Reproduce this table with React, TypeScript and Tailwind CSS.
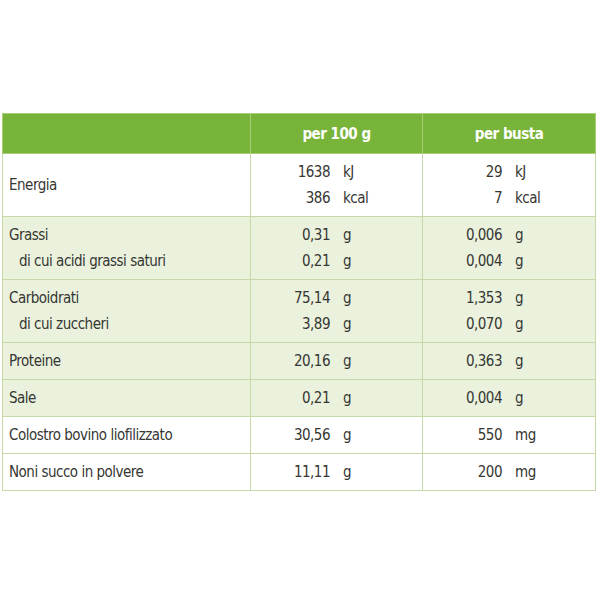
import React from "react";

type Riga = {
	nome: string[];
	cento: [string, string][];
	busta: [string, string][];
	verde: boolean;
};

const righe: Riga[] = [
	{ nome: ["Energia"], cento: [["1638", "kJ"], ["386", "kcal"]], busta: [["29", "kJ"], ["7", "kcal"]], verde: false },
	{
		nome: ["Grassi", "di cui acidi grassi saturi"],
		cento: [["0,31", "g"], ["0,21", "g"]],
		busta: [["0,006", "g"], ["0,004", "g"]],
		verde: true,
	},
	{
		nome: ["Carboidrati", "di cui zuccheri"],
		cento: [["75,14", "g"], ["3,89", "g"]],
		busta: [["1,353", "g"], ["0,070", "g"]],
		verde: true,
	},
	{ nome: ["Proteine"], cento: [["20,16", "g"]], busta: [["0,363", "g"]], verde: true },
	{ nome: ["Sale"], cento: [["0,21", "g"]], busta: [["0,004", "g"]], verde: true },
	{ nome: ["Colostro bovino liofilizzato"], cento: [["30,56", "g"]], busta: [["550", "mg"]], verde: false },
	{ nome: ["Noni succo in polvere"], cento: [["11,11", "g"]], busta: [["200", "mg"]], verde: false },
];

function Valori({ valori }: { valori: [string, string][] }) {
	return (
		<div className="flex flex-col">
			{valori.map(([n, u], i) => (
				<div key={i} className="flex">
					<span className="w-[79px] text-right">{n}</span>
					<span className="ml-[13px]">{u}</span>
				</div>
			))}
		</div>
	);
}

export default function App() {
	return (
		<div className="h-[600px] w-[600px] bg-white pt-[113px] pl-[2px]">
			<table
				className="w-[593px] table-fixed border-collapse text-[15px] leading-[26px] tracking-[-0.5px] text-[#363633]"
				style={{ fontFamily: '"DejaVu Sans Condensed", "DejaVu Sans", sans-serif', fontStretch: "condensed" }}
			>
				<colgroup>
					<col className="w-[248px]" />
					<col className="w-[172px]" />
					<col className="w-[173px]" />
				</colgroup>
				<thead>
					<tr className="h-[40px] bg-[#78b43a] font-bold text-white">
						<th className="border border-[#a8cf78]"></th>
						<th className="border border-[#a8cf78] text-center">per 100 g</th>
						<th className="border border-[#a8cf78] text-center">per busta</th>
					</tr>
				</thead>
				<tbody>
					{righe.map(riga => (
						<tr key={riga.nome[0]} className={riga.verde ? "bg-[#eaf2dd]" : "bg-white"}>
							<td className="border border-[#c6d9a8] py-[5px] pl-[6px] align-middle">
								{riga.nome.map((n, i) => (
									<div key={i} className={i > 0 ? "pl-[10px]" : ""}>
										{n}
									</div>
								))}
							</td>
							<td className="border border-[#c6d9a8] py-[5px] align-middle">
								<Valori valori={riga.cento} />
							</td>
							<td className="border border-[#c6d9a8] py-[5px] align-middle">
								<Valori valori={riga.busta} />
							</td>
						</tr>
					))}
				</tbody>
			</table>
		</div>
	);
}
